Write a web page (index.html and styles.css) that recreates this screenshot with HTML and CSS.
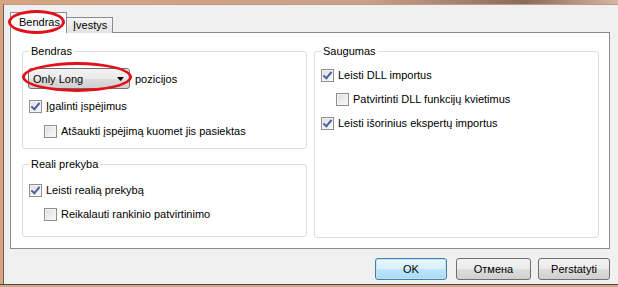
FILE: index.html
```html
<!DOCTYPE html>
<html>
<head>
  <title>Nustatymai</title>
  <meta charset="UTF-8" />
  <link rel="stylesheet" href="styles.css">
</head>
<body>
  <div class="topbar"></div>
  <div class="main">
    <div class="side"></div>
    <div class="dialog">
      <div class="tabs">
        <div class="tab active">Bendras</div>
        <div class="tab"><u>Į</u>vestys</div>
      </div>

      <div class="panel">
        <div class="col">
          <fieldset class="grp grp-general">
            <legend>Bendras</legend>
            <div class="combo-row">
              <div class="combo">
                <span>Only Long</span>
                <svg width="7" height="4" viewBox="0 0 7 4"><path d="M0 0H7L3.5 4Z" fill="#000"/></svg>
              </div>
              <span>pozicijos</span>
            </div>
            <label class="check on"><span class="box"></span><span><u>Į</u>galinti įspėjimus</span></label>
            <label class="check sub"><span class="box"></span><span>Atšaukti įspėjimą kuomet jis pasiektas</span></label>
          </fieldset>

          <fieldset class="grp grp-real">
            <legend>Reali prekyba</legend>
            <label class="check on"><span class="box"></span><span>Leisti realią prekybą</span></label>
            <label class="check sub"><span class="box"></span><span>Reikalauti rankinio patvirtinimo</span></label>
          </fieldset>
        </div>

        <fieldset class="grp grp-security">
          <legend>Saugumas</legend>
          <label class="check on"><span class="box"></span><span>Leisti DLL importus</span></label>
          <label class="check sub"><span class="box"></span><span>Patvirtinti DLL funkcijų kvietimus</span></label>
          <label class="check on"><span class="box"></span><span>Leisti išorinius ekspertų importus</span></label>
        </fieldset>
      </div>

      <div class="buttons">
        <button class="default">OK</button>
        <button>Отмена</button>
        <button>Perstatyti</button>
      </div>
    </div>
  </div>
  <div class="bottombar"></div>

  <!-- red marks drawn over the screenshot -->
  <div class="mark mark-tab"></div>
  <div class="mark mark-combo"></div>
</body>
</html>
```

FILE: styles.css
```css
body { margin: 0; width: 618px; height: 287px; overflow: hidden; position: relative; background: #f0f0f0; font-family: "Liberation Sans", Arial, sans-serif; font-size: 11px; color: #000; }
.topbar { height: 4px; background: linear-gradient(90deg, #d7a582 0%, #c9a088 60%, #8a6a58 85%, #d8b6a0 100%); }
.main { display: flex; height: 280px; }
.side { width: 4px; background: #d9a47f; }
.dialog { flex: 1; border-left: 1px solid #5e5e5e; border-top: 1px solid #b59a8a; padding: 7px 8px 0 6px; }
.bottombar { height: 2px; border-top: 1px solid #4a4a4a; background: #d6a886; }

.tabs { display: flex; align-items: flex-end; height: 20px; position: relative; z-index: 1; }
.tab { height: 15px; line-height: 15px; padding: 0 5px 0 6px; border: 1px solid #898c95; border-bottom: 0; background: linear-gradient(#f6f6f6, #e2e2e2); margin-bottom: -1px; }
.tab.active { height: 20px; line-height: 19px; padding: 0 6px 0 8px; background: #fff; margin-bottom: -1px; }
.tab + .tab { border-left: 0; }

.panel { width: 576px; height: 203px; border: 1px solid #898c95; background: #fff; padding: 12px 11px 0 11px; display: grid; grid-template-columns: 285px 285px; column-gap: 7px; align-items: start; }
.col { display: flex; flex-direction: column; row-gap: 9px; }

.grp { margin: 0; border: 1px solid #d5dfe5; border-radius: 3px; padding: 0 6px; display: flex; flex-direction: column; align-items: flex-start; }
.grp legend { padding: 0 2px; line-height: 13px; }
.grp-general { padding-top: 10px; padding-bottom: 10px; row-gap: 12px; }
.grp-general .combo-row { margin-bottom: -1px; }
.grp-real { padding-top: 13px; padding-bottom: 15px; row-gap: 11px; }
.grp-security { height: 180px; padding-top: 11px; row-gap: 11px; }

.combo-row { display: flex; align-items: center; gap: 5px; margin-left: -1px; }
.combo { width: 91px; height: 19px; border: 1px solid #707070; border-radius: 3px; background: linear-gradient(#f2f2f2 0%, #ebebeb 50%, #dddddd 51%, #cfcfcf 100%); display: flex; align-items: center; justify-content: space-between; padding: 0 5px 0 4px; }

.check { display: flex; align-items: center; gap: 4px; line-height: 13px; height: 13px; }
.check.sub { margin-left: 15px; }
.box { width: 11px; height: 11px; border: 1px solid #8e8f8f; background: linear-gradient(135deg, #dcdcdc, #fbfbfb); box-shadow: inset 0 0 0 1px #f4f4f4; position: relative; }
.check.on .box::after { content: ""; position: absolute; left: 3px; top: 0; width: 3px; height: 7px; border: solid #4c61a0; border-width: 0 2px 2px 0; transform: rotate(40deg); }

.buttons { display: flex; justify-content: flex-end; gap: 7px; margin-top: 9px; }
.buttons button { height: 22px; width: 72px; padding: 0; font: inherit; color: #000; border: 1px solid #707070; border-radius: 3px; background: linear-gradient(#f2f2f2 0%, #ebebeb 50%, #dddddd 51%, #cfcfcf 100%); }
.buttons button:nth-child(2) { width: 75px; }
.buttons button.default { border-color: #3c7fb1; background: linear-gradient(#eaf6fd 0%, #d9f0fc 50%, #bee6fd 51%, #a7d9f5 100%); box-shadow: inset 0 0 0 1px #c6e2f4; margin-right: 2px; }

.mark { position: absolute; z-index: 5; border: 3px solid #e3101a; border-radius: 50%; pointer-events: none; }
.mark-tab { left: 8px; top: 10px; width: 51px; height: 18px; }
.mark-combo { left: 22px; top: 62px; width: 104px; height: 24px; }
```
